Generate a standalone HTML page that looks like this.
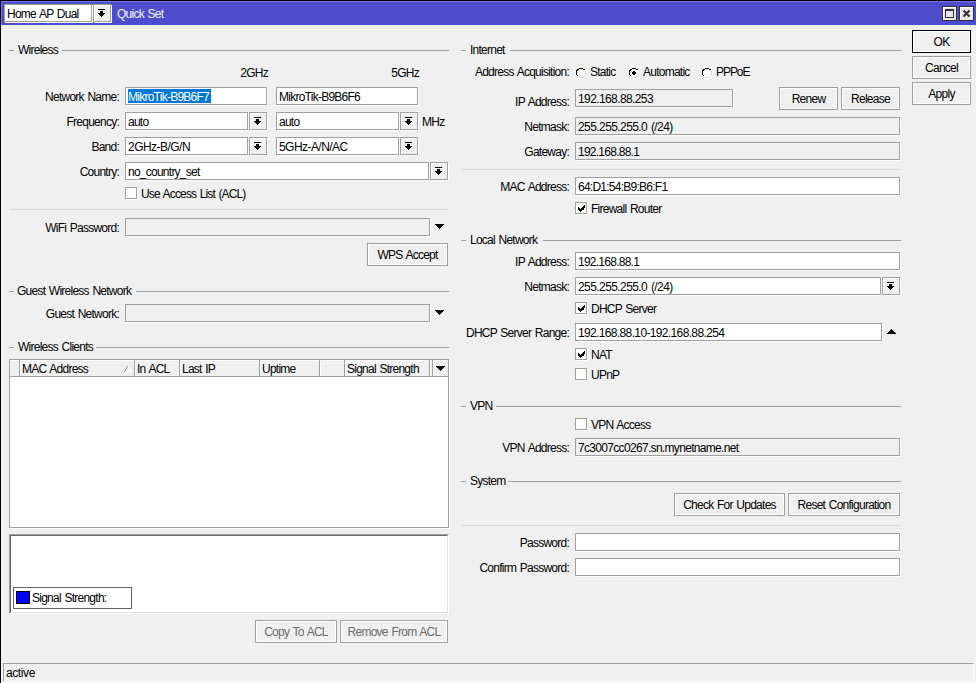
<!DOCTYPE html><html><head><meta charset="utf-8"><style>html,body{margin:0;padding:0;width:976px;height:683px;overflow:hidden;background:#f0f0f0;position:relative}.t{position:absolute;font-family:'Liberation Sans',sans-serif;font-size:12px;line-height:14px;letter-spacing:-0.75px;word-spacing:1px;white-space:nowrap;}svg{display:block}</style></head><body>
<div style="position:absolute;left:0px;top:0px;width:976px;height:1px;background:#000"></div>
<div style="position:absolute;left:0px;top:0px;width:1px;height:683px;background:#000"></div>
<div style="position:absolute;left:1px;top:1px;width:975px;height:24px;background:#4c4ccc"></div>
<div style="position:absolute;left:1px;top:1px;width:975px;height:1px;background:#7878dc"></div>
<div style="position:absolute;left:1px;top:1px;width:1px;height:24px;background:#7878dc"></div>
<div style="position:absolute;left:4px;top:4px;width:88px;height:18px;box-sizing:border-box;border:1px solid #a0a0a0;background:#fff;box-shadow:1px 1px 0 #fff"></div>
<div class="t" style="left:7px;top:7px;color:#000;">Home AP Dual</div>
<div style="position:absolute;left:93px;top:4px;width:18px;height:18px;box-sizing:border-box;border:1px solid #a0a0a0;background:#f0f0f0;box-shadow:inset 1px 1px 0 #fff,1px 1px 0 #fff"></div>
<svg style="position:absolute;left:98px;top:9px" width="7" height="8" shape-rendering="crispEdges"><rect x="0" y="0" width="7" height="1"/><rect x="2" y="2" width="3" height="2"/><rect x="0" y="4" width="7" height="1"/><rect x="1" y="5" width="5" height="1"/><rect x="2" y="6" width="3" height="1"/><rect x="3" y="7" width="1" height="1"/></svg>
<div class="t" style="left:117px;top:7px;color:#f4f4ff;">Quick Set</div>
<div style="position:absolute;left:942px;top:6px;width:15px;height:15px;box-sizing:border-box;border:1px solid #333;background:#e8e6ea;box-shadow:inset 1px 1px 0 #fff"></div>
<div style="position:absolute;left:959px;top:6px;width:15px;height:15px;box-sizing:border-box;border:1px solid #333;background:#e8e6ea;box-shadow:inset 1px 1px 0 #fff"></div>
<svg style="position:absolute;left:945px;top:9px" width="9" height="9" shape-rendering="crispEdges"><path d="M0 0h9v2h-9zM0 2h1v7h-1zM8 2h1v7h-1zM0 8h9v1h-9z" fill="#333"/></svg>
<svg style="position:absolute;left:962px;top:9px" width="9" height="9"><path d="M1.5 1.5L7.5 7.5M7.5 1.5L1.5 7.5" stroke="#333" stroke-width="2"/></svg>
<div style="position:absolute;left:912px;top:30px;width:59px;height:23px;box-sizing:border-box;border:1px solid #000;background:#f0f0f0;box-shadow:inset 1px 1px 0 #fff,inset -1px -1px 0 #fff"></div>
<div class="t" style="left:912px;width:59px;top:35px;text-align:center;color:#000">OK</div>
<div style="position:absolute;left:912px;top:56px;width:59px;height:23px;box-sizing:border-box;border:1px solid #a0a0a0;background:#f0f0f0;box-shadow:inset 1px 1px 0 #fff,inset -1px -1px 0 #fff"></div>
<div class="t" style="left:912px;width:59px;top:61px;text-align:center;color:#000">Cancel</div>
<div style="position:absolute;left:912px;top:82px;width:59px;height:23px;box-sizing:border-box;border:1px solid #a0a0a0;background:#f0f0f0;box-shadow:inset 1px 1px 0 #fff,inset -1px -1px 0 #fff"></div>
<div class="t" style="left:912px;width:59px;top:87px;text-align:center;color:#000">Apply</div>
<div style="position:absolute;left:9px;top:50px;width:5px;height:1px;background:#a0a0a0"></div>
<div class="t" style="left:18px;top:43px;color:#000;">Wireless</div>
<div style="position:absolute;left:62px;top:50px;width:387px;height:1px;background:#a0a0a0"></div>
<div class="t" style="right:708px;top:66px;color:#000;text-align:right">2GHz</div>
<div class="t" style="right:557px;top:66px;color:#000;text-align:right">5GHz</div>
<div class="t" style="right:857px;top:90px;color:#000;text-align:right">Network Name:</div>
<div style="position:absolute;left:125px;top:87px;width:142px;height:18px;box-sizing:border-box;border:1px solid #a0a0a0;background:#fff;box-shadow:1px 1px 0 #fff"></div>
<div style="position:absolute;left:128px;top:89px;width:83px;height:14px;background:#0078d7"></div>
<div class="t" style="left:128px;top:90px;color:#fff;">MikroTik-B9B6F7</div>
<div style="position:absolute;left:276px;top:87px;width:142px;height:18px;box-sizing:border-box;border:1px solid #a0a0a0;background:#fff;box-shadow:1px 1px 0 #fff"></div>
<div class="t" style="left:279px;top:90px;color:#000;">MikroTik-B9B6F6</div>
<div class="t" style="right:857px;top:115px;color:#000;text-align:right">Frequency:</div>
<div style="position:absolute;left:125px;top:112px;width:123px;height:18px;box-sizing:border-box;border:1px solid #a0a0a0;background:#fff;box-shadow:1px 1px 0 #fff"></div>
<div class="t" style="left:128px;top:115px;color:#000;">auto</div>
<div style="position:absolute;left:249px;top:112px;width:18px;height:18px;box-sizing:border-box;border:1px solid #a0a0a0;background:#f0f0f0;box-shadow:inset 1px 1px 0 #fff,1px 1px 0 #fff"></div>
<svg style="position:absolute;left:254px;top:117px" width="7" height="8" shape-rendering="crispEdges"><rect x="0" y="0" width="7" height="1"/><rect x="2" y="2" width="3" height="2"/><rect x="0" y="4" width="7" height="1"/><rect x="1" y="5" width="5" height="1"/><rect x="2" y="6" width="3" height="1"/><rect x="3" y="7" width="1" height="1"/></svg>
<div style="position:absolute;left:276px;top:112px;width:123px;height:18px;box-sizing:border-box;border:1px solid #a0a0a0;background:#fff;box-shadow:1px 1px 0 #fff"></div>
<div class="t" style="left:279px;top:115px;color:#000;">auto</div>
<div style="position:absolute;left:400px;top:112px;width:18px;height:18px;box-sizing:border-box;border:1px solid #a0a0a0;background:#f0f0f0;box-shadow:inset 1px 1px 0 #fff,1px 1px 0 #fff"></div>
<svg style="position:absolute;left:405px;top:117px" width="7" height="8" shape-rendering="crispEdges"><rect x="0" y="0" width="7" height="1"/><rect x="2" y="2" width="3" height="2"/><rect x="0" y="4" width="7" height="1"/><rect x="1" y="5" width="5" height="1"/><rect x="2" y="6" width="3" height="1"/><rect x="3" y="7" width="1" height="1"/></svg>
<div class="t" style="left:422px;top:115px;color:#000;">MHz</div>
<div class="t" style="right:857px;top:140px;color:#000;text-align:right">Band:</div>
<div style="position:absolute;left:125px;top:137px;width:123px;height:18px;box-sizing:border-box;border:1px solid #a0a0a0;background:#fff;box-shadow:1px 1px 0 #fff"></div>
<div class="t" style="left:128px;top:140px;color:#000;letter-spacing:-0.53px;">2GHz-B/G/N</div>
<div style="position:absolute;left:249px;top:137px;width:18px;height:18px;box-sizing:border-box;border:1px solid #a0a0a0;background:#f0f0f0;box-shadow:inset 1px 1px 0 #fff,1px 1px 0 #fff"></div>
<svg style="position:absolute;left:254px;top:142px" width="7" height="8" shape-rendering="crispEdges"><rect x="0" y="0" width="7" height="1"/><rect x="2" y="2" width="3" height="2"/><rect x="0" y="4" width="7" height="1"/><rect x="1" y="5" width="5" height="1"/><rect x="2" y="6" width="3" height="1"/><rect x="3" y="7" width="1" height="1"/></svg>
<div style="position:absolute;left:276px;top:137px;width:123px;height:18px;box-sizing:border-box;border:1px solid #a0a0a0;background:#fff;box-shadow:1px 1px 0 #fff"></div>
<div class="t" style="left:279px;top:140px;color:#000;letter-spacing:-0.55px;">5GHz-A/N/AC</div>
<div style="position:absolute;left:400px;top:137px;width:18px;height:18px;box-sizing:border-box;border:1px solid #a0a0a0;background:#f0f0f0;box-shadow:inset 1px 1px 0 #fff,1px 1px 0 #fff"></div>
<svg style="position:absolute;left:405px;top:142px" width="7" height="8" shape-rendering="crispEdges"><rect x="0" y="0" width="7" height="1"/><rect x="2" y="2" width="3" height="2"/><rect x="0" y="4" width="7" height="1"/><rect x="1" y="5" width="5" height="1"/><rect x="2" y="6" width="3" height="1"/><rect x="3" y="7" width="1" height="1"/></svg>
<div class="t" style="right:857px;top:165px;color:#000;text-align:right">Country:</div>
<div style="position:absolute;left:125px;top:162px;width:304px;height:18px;box-sizing:border-box;border:1px solid #a0a0a0;background:#fff;box-shadow:1px 1px 0 #fff"></div>
<div class="t" style="left:128px;top:165px;color:#000;">no_country_set</div>
<div style="position:absolute;left:430px;top:162px;width:18px;height:18px;box-sizing:border-box;border:1px solid #a0a0a0;background:#f0f0f0;box-shadow:inset 1px 1px 0 #fff,1px 1px 0 #fff"></div>
<svg style="position:absolute;left:435px;top:167px" width="7" height="8" shape-rendering="crispEdges"><rect x="0" y="0" width="7" height="1"/><rect x="2" y="2" width="3" height="2"/><rect x="0" y="4" width="7" height="1"/><rect x="1" y="5" width="5" height="1"/><rect x="2" y="6" width="3" height="1"/><rect x="3" y="7" width="1" height="1"/></svg>
<div style="position:absolute;left:125px;top:187px;width:12px;height:12px;box-sizing:border-box;border:1px solid #a0a0a0;background:#fff;box-shadow:1px 1px 0 #fff"></div>
<div class="t" style="left:141px;top:187px;color:#000;letter-spacing:-0.85px;">Use Access List (ACL)</div>
<div style="position:absolute;left:10px;top:209px;width:439px;height:1px;background:#dadada"></div>
<div class="t" style="right:857px;top:221px;color:#000;text-align:right">WiFi Password:</div>
<div style="position:absolute;left:125px;top:218px;width:305px;height:18px;box-sizing:border-box;border:1px solid #a0a0a0;background:#f0f0f0;box-shadow:1px 1px 0 #fff"></div>
<svg style="position:absolute;left:435px;top:224px" width="9" height="5" shape-rendering="crispEdges"><path d="M0 0h9v1h-9zM1 1h7v1h-7zM2 2h5v1h-5zM3 3h3v1h-3zM4 4h1v1h-1z"/></svg>
<div style="position:absolute;left:367px;top:243px;width:81px;height:23px;box-sizing:border-box;border:1px solid #a0a0a0;background:#f0f0f0;box-shadow:inset 1px 1px 0 #fff,inset -1px -1px 0 #fff"></div>
<div class="t" style="left:367px;width:81px;top:248px;text-align:center;color:#000">WPS Accept</div>
<div style="position:absolute;left:9px;top:291px;width:5px;height:1px;background:#a0a0a0"></div>
<div class="t" style="left:17px;top:284px;color:#000;">Guest Wireless Network</div>
<div style="position:absolute;left:136px;top:291px;width:313px;height:1px;background:#a0a0a0"></div>
<div class="t" style="right:857px;top:307px;color:#000;text-align:right">Guest Network:</div>
<div style="position:absolute;left:125px;top:304px;width:305px;height:18px;box-sizing:border-box;border:1px solid #a0a0a0;background:#f0f0f0;box-shadow:1px 1px 0 #fff"></div>
<svg style="position:absolute;left:435px;top:310px" width="9" height="5" shape-rendering="crispEdges"><path d="M0 0h9v1h-9zM1 1h7v1h-7zM2 2h5v1h-5zM3 3h3v1h-3zM4 4h1v1h-1z"/></svg>
<div style="position:absolute;left:9px;top:347px;width:5px;height:1px;background:#a0a0a0"></div>
<div class="t" style="left:18px;top:340px;color:#000;">Wireless Clients</div>
<div style="position:absolute;left:96px;top:347px;width:353px;height:1px;background:#a0a0a0"></div>
<div style="position:absolute;left:9px;top:359px;width:440px;height:169px;box-sizing:border-box;border:1px solid #a0a0a0;background:#fff;box-shadow:1px 1px 0 #fff"></div>
<div style="position:absolute;left:10px;top:360px;width:438px;height:16px;background:#f0f0f0;border-bottom:1px solid #a0a0a0;box-shadow:inset 0 1px 0 #fff"></div>
<div style="position:absolute;left:19px;top:360px;width:1px;height:16px;background:#a0a0a0"></div>
<div style="position:absolute;left:20px;top:361px;width:1px;height:15px;background:#fff"></div>
<div style="position:absolute;left:134px;top:360px;width:1px;height:16px;background:#a0a0a0"></div>
<div style="position:absolute;left:135px;top:361px;width:1px;height:15px;background:#fff"></div>
<div style="position:absolute;left:179px;top:360px;width:1px;height:16px;background:#a0a0a0"></div>
<div style="position:absolute;left:180px;top:361px;width:1px;height:15px;background:#fff"></div>
<div style="position:absolute;left:259px;top:360px;width:1px;height:16px;background:#a0a0a0"></div>
<div style="position:absolute;left:260px;top:361px;width:1px;height:15px;background:#fff"></div>
<div style="position:absolute;left:319px;top:360px;width:1px;height:16px;background:#a0a0a0"></div>
<div style="position:absolute;left:320px;top:361px;width:1px;height:15px;background:#fff"></div>
<div style="position:absolute;left:344px;top:360px;width:1px;height:16px;background:#a0a0a0"></div>
<div style="position:absolute;left:345px;top:361px;width:1px;height:15px;background:#fff"></div>
<div style="position:absolute;left:429px;top:360px;width:1px;height:16px;background:#a0a0a0"></div>
<div style="position:absolute;left:430px;top:361px;width:1px;height:15px;background:#fff"></div>
<div style="position:absolute;left:432px;top:360px;width:1px;height:16px;background:#a0a0a0"></div>
<div style="position:absolute;left:433px;top:361px;width:1px;height:15px;background:#fff"></div>
<div class="t" style="left:22px;top:362px;color:#000;">MAC Address</div>
<div class="t" style="left:137px;top:362px;color:#000;">In ACL</div>
<div class="t" style="left:182px;top:362px;color:#000;">Last IP</div>
<div class="t" style="left:262px;top:362px;color:#000;">Uptime</div>
<div class="t" style="left:347px;top:362px;color:#000;">Signal Strength</div>
<svg style="position:absolute;left:436px;top:366px" width="9" height="5" shape-rendering="crispEdges"><path d="M0 0h9v1h-9zM1 1h7v1h-7zM2 2h5v1h-5zM3 3h3v1h-3zM4 4h1v1h-1z"/></svg>
<svg style="position:absolute;left:124px;top:366px" width="8" height="6" shape-rendering="crispEdges"><path d="M3 0h1v1h-1zM2 1h1v2h-1zM1 3h1v2h-1zM0 5h1v1h-1z" fill="#8a8a8a"/><path d="M4 0h1v2h-1zM5 2h1v2h-1zM6 4h1v1h-1zM1 5h7v1h-7z" fill="#fff"/></svg>
<div style="position:absolute;left:9px;top:534px;width:440px;height:80px;box-sizing:border-box;border-top:1px solid #a0a0a0;border-left:1px solid #a0a0a0;border-right:1px solid #fff;border-bottom:1px solid #fff;"></div>
<div style="position:absolute;left:10px;top:535px;width:438px;height:78px;box-sizing:border-box;border-top:1px solid #696969;border-left:1px solid #696969;border-right:1px solid #e3e3e3;border-bottom:1px solid #e3e3e3;background:#fff"></div>
<div style="position:absolute;left:13px;top:587px;width:119px;height:22px;box-sizing:border-box;border:1px solid #646464;background:#fff"></div>
<div style="position:absolute;left:16px;top:591px;width:14px;height:13px;box-sizing:border-box;border:1px solid #000;background:#0000ff"></div>
<div class="t" style="left:32px;top:591px;color:#000;">Signal Strength:</div>
<div style="position:absolute;left:255px;top:620px;width:82px;height:23px;box-sizing:border-box;border:1px solid #a0a0a0;background:#f0f0f0;box-shadow:inset 1px 1px 0 #fff,inset -1px -1px 0 #fff"></div>
<div class="t" style="left:255px;width:82px;top:625px;text-align:center;color:#6d6d6d">Copy To ACL</div>
<div style="position:absolute;left:340px;top:620px;width:108px;height:23px;box-sizing:border-box;border:1px solid #a0a0a0;background:#f0f0f0;box-shadow:inset 1px 1px 0 #fff,inset -1px -1px 0 #fff"></div>
<div class="t" style="left:340px;width:108px;top:625px;text-align:center;color:#6d6d6d">Remove From ACL</div>
<div style="position:absolute;left:3px;top:663px;width:971px;height:19px;box-sizing:border-box;border-top:1px solid #a0a0a0;border-left:1px solid #a0a0a0;border-right:1px solid #fff;border-bottom:1px solid #fff"></div>
<div class="t" style="left:6px;top:666px;color:#000;letter-spacing:-0.4px;">active</div>
<div style="position:absolute;left:461px;top:50px;width:5px;height:1px;background:#a0a0a0"></div>
<div class="t" style="left:470px;top:43px;color:#000;">Internet</div>
<div style="position:absolute;left:510px;top:50px;width:391px;height:1px;background:#a0a0a0"></div>
<div class="t" style="right:407px;top:65px;color:#000;text-align:right">Address Acquisition:</div>
<svg style="position:absolute;left:575px;top:67px" width="12" height="12" shape-rendering="crispEdges"><rect x="2" y="2" width="8" height="1" fill="#fff"/><rect x="1" y="3" width="10" height="6" fill="#fff"/><rect x="2" y="9" width="8" height="1" fill="#fff"/><rect x="4" y="10" width="4" height="1" fill="#fff"/><rect x="4" y="1" width="4" height="1" fill="#fff"/><rect x="10" y="4" width="1" height="4" fill="#d8d8d8"/><rect x="4" y="10" width="4" height="1" fill="#d8d8d8"/><rect x="8" y="9" width="2" height="1" fill="#e4e4e4"/><rect x="9" y="8" width="1" height="1" fill="#e4e4e4"/><rect x="11" y="4" width="1" height="4" fill="#fff"/><rect x="4" y="11" width="4" height="1" fill="#fff"/><rect x="10" y="8" width="1" height="2" fill="#fafafa"/><rect x="8" y="10" width="2" height="1" fill="#fafafa"/><rect x="4" y="1" width="4" height="1" fill="#000"/><rect x="2" y="2" width="2" height="1" fill="#000"/><rect x="8" y="2" width="2" height="1" fill="#000"/><rect x="1" y="3" width="2" height="1" fill="#000"/><rect x="1" y="4" width="1" height="4" fill="#000"/><rect x="2" y="8" width="1" height="1" fill="#000"/></svg>
<div class="t" style="left:590px;top:65px;color:#000;">Static</div>
<svg style="position:absolute;left:628px;top:67px" width="12" height="12" shape-rendering="crispEdges"><rect x="2" y="2" width="8" height="1" fill="#fff"/><rect x="1" y="3" width="10" height="6" fill="#fff"/><rect x="2" y="9" width="8" height="1" fill="#fff"/><rect x="4" y="10" width="4" height="1" fill="#fff"/><rect x="4" y="1" width="4" height="1" fill="#fff"/><rect x="10" y="4" width="1" height="4" fill="#d8d8d8"/><rect x="4" y="10" width="4" height="1" fill="#d8d8d8"/><rect x="8" y="9" width="2" height="1" fill="#e4e4e4"/><rect x="9" y="8" width="1" height="1" fill="#e4e4e4"/><rect x="11" y="4" width="1" height="4" fill="#fff"/><rect x="4" y="11" width="4" height="1" fill="#fff"/><rect x="10" y="8" width="1" height="2" fill="#fafafa"/><rect x="8" y="10" width="2" height="1" fill="#fafafa"/><rect x="4" y="1" width="4" height="1" fill="#000"/><rect x="2" y="2" width="2" height="1" fill="#000"/><rect x="8" y="2" width="2" height="1" fill="#000"/><rect x="1" y="3" width="2" height="1" fill="#000"/><rect x="1" y="4" width="1" height="4" fill="#000"/><rect x="2" y="8" width="1" height="1" fill="#000"/><rect x="5" y="4" width="2" height="1" fill="#000"/><rect x="4" y="5" width="4" height="2" fill="#000"/><rect x="5" y="7" width="2" height="1" fill="#000"/></svg>
<div class="t" style="left:643px;top:65px;color:#000;">Automatic</div>
<svg style="position:absolute;left:701px;top:67px" width="12" height="12" shape-rendering="crispEdges"><rect x="2" y="2" width="8" height="1" fill="#fff"/><rect x="1" y="3" width="10" height="6" fill="#fff"/><rect x="2" y="9" width="8" height="1" fill="#fff"/><rect x="4" y="10" width="4" height="1" fill="#fff"/><rect x="4" y="1" width="4" height="1" fill="#fff"/><rect x="10" y="4" width="1" height="4" fill="#d8d8d8"/><rect x="4" y="10" width="4" height="1" fill="#d8d8d8"/><rect x="8" y="9" width="2" height="1" fill="#e4e4e4"/><rect x="9" y="8" width="1" height="1" fill="#e4e4e4"/><rect x="11" y="4" width="1" height="4" fill="#fff"/><rect x="4" y="11" width="4" height="1" fill="#fff"/><rect x="10" y="8" width="1" height="2" fill="#fafafa"/><rect x="8" y="10" width="2" height="1" fill="#fafafa"/><rect x="4" y="1" width="4" height="1" fill="#000"/><rect x="2" y="2" width="2" height="1" fill="#000"/><rect x="8" y="2" width="2" height="1" fill="#000"/><rect x="1" y="3" width="2" height="1" fill="#000"/><rect x="1" y="4" width="1" height="4" fill="#000"/><rect x="2" y="8" width="1" height="1" fill="#000"/></svg>
<div class="t" style="left:716px;top:65px;color:#000;letter-spacing:-1.05px;">PPPoE</div>
<div class="t" style="right:407px;top:95px;color:#000;text-align:right">IP Address:</div>
<div style="position:absolute;left:575px;top:89px;width:158px;height:18px;box-sizing:border-box;border:1px solid #a0a0a0;background:#f0f0f0;box-shadow:1px 1px 0 #fff"></div>
<div class="t" style="left:578px;top:92px;color:#000;letter-spacing:-0.6px;">192.168.88.253</div>
<div style="position:absolute;left:779px;top:87px;width:59px;height:23px;box-sizing:border-box;border:1px solid #a0a0a0;background:#f0f0f0;box-shadow:inset 1px 1px 0 #fff,inset -1px -1px 0 #fff"></div>
<div class="t" style="left:779px;width:59px;top:92px;text-align:center;color:#000">Renew</div>
<div style="position:absolute;left:841px;top:87px;width:59px;height:23px;box-sizing:border-box;border:1px solid #a0a0a0;background:#f0f0f0;box-shadow:inset 1px 1px 0 #fff,inset -1px -1px 0 #fff"></div>
<div class="t" style="left:841px;width:59px;top:92px;text-align:center;color:#000">Release</div>
<div class="t" style="right:407px;top:120px;color:#000;text-align:right">Netmask:</div>
<div style="position:absolute;left:575px;top:117px;width:325px;height:18px;box-sizing:border-box;border:1px solid #a0a0a0;background:#f0f0f0;box-shadow:1px 1px 0 #fff"></div>
<div class="t" style="left:578px;top:120px;color:#000;letter-spacing:-0.58px;">255.255.255.0 (/24)</div>
<div class="t" style="right:407px;top:145px;color:#000;text-align:right">Gateway:</div>
<div style="position:absolute;left:575px;top:142px;width:325px;height:18px;box-sizing:border-box;border:1px solid #a0a0a0;background:#f0f0f0;box-shadow:1px 1px 0 #fff"></div>
<div class="t" style="left:578px;top:145px;color:#000;">192.168.88.1</div>
<div style="position:absolute;left:462px;top:169px;width:439px;height:1px;background:#dadada"></div>
<div class="t" style="right:407px;top:180px;color:#000;text-align:right">MAC Address:</div>
<div style="position:absolute;left:575px;top:177px;width:325px;height:18px;box-sizing:border-box;border:1px solid #a0a0a0;background:#fff;box-shadow:1px 1px 0 #fff"></div>
<div class="t" style="left:578px;top:180px;color:#000;">64:D1:54:B9:B6:F1</div>
<div style="position:absolute;left:575px;top:202px;width:12px;height:12px;box-sizing:border-box;border:1px solid #a0a0a0;background:#fff;box-shadow:1px 1px 0 #fff"></div>
<svg style="position:absolute;left:578px;top:205px" width="7" height="7" shape-rendering="crispEdges"><path d="M6 0h1v3h-1zM5 1h1v4h-1zM4 2h1v3h-1zM3 3h1v3h-1zM2 4h1v3h-1zM1 3h1v3h-1zM0 2h1v3h-1z"/></svg>
<div class="t" style="left:591px;top:202px;color:#000;">Firewall Router</div>
<div style="position:absolute;left:461px;top:240px;width:5px;height:1px;background:#a0a0a0"></div>
<div class="t" style="left:470px;top:233px;color:#000;">Local Network</div>
<div style="position:absolute;left:543px;top:240px;width:358px;height:1px;background:#a0a0a0"></div>
<div class="t" style="right:407px;top:255px;color:#000;text-align:right">IP Address:</div>
<div style="position:absolute;left:575px;top:252px;width:325px;height:18px;box-sizing:border-box;border:1px solid #a0a0a0;background:#fff;box-shadow:1px 1px 0 #fff"></div>
<div class="t" style="left:578px;top:255px;color:#000;">192.168.88.1</div>
<div class="t" style="right:407px;top:280px;color:#000;text-align:right">Netmask:</div>
<div style="position:absolute;left:575px;top:277px;width:306px;height:18px;box-sizing:border-box;border:1px solid #a0a0a0;background:#fff;box-shadow:1px 1px 0 #fff"></div>
<div class="t" style="left:578px;top:280px;color:#000;letter-spacing:-0.58px;">255.255.255.0 (/24)</div>
<div style="position:absolute;left:882px;top:277px;width:18px;height:18px;box-sizing:border-box;border:1px solid #a0a0a0;background:#f0f0f0;box-shadow:inset 1px 1px 0 #fff,1px 1px 0 #fff"></div>
<svg style="position:absolute;left:887px;top:282px" width="7" height="8" shape-rendering="crispEdges"><rect x="0" y="0" width="7" height="1"/><rect x="2" y="2" width="3" height="2"/><rect x="0" y="4" width="7" height="1"/><rect x="1" y="5" width="5" height="1"/><rect x="2" y="6" width="3" height="1"/><rect x="3" y="7" width="1" height="1"/></svg>
<div style="position:absolute;left:575px;top:302px;width:12px;height:12px;box-sizing:border-box;border:1px solid #a0a0a0;background:#fff;box-shadow:1px 1px 0 #fff"></div>
<svg style="position:absolute;left:578px;top:305px" width="7" height="7" shape-rendering="crispEdges"><path d="M6 0h1v3h-1zM5 1h1v4h-1zM4 2h1v3h-1zM3 3h1v3h-1zM2 4h1v3h-1zM1 3h1v3h-1zM0 2h1v3h-1z"/></svg>
<div class="t" style="left:591px;top:302px;color:#000;">DHCP Server</div>
<div class="t" style="right:407px;top:326px;color:#000;text-align:right">DHCP Server Range:</div>
<div style="position:absolute;left:575px;top:323px;width:307px;height:18px;box-sizing:border-box;border:1px solid #a0a0a0;background:#fff;box-shadow:1px 1px 0 #fff"></div>
<div class="t" style="left:578px;top:326px;color:#000;letter-spacing:-0.64px;">192.168.88.10-192.168.88.254</div>
<svg style="position:absolute;left:887px;top:329px" width="9" height="5" shape-rendering="crispEdges"><path d="M0 4h9v1h-9zM1 3h7v1h-7zM2 2h5v1h-5zM3 1h3v1h-3zM4 0h1v1h-1z"/></svg>
<div style="position:absolute;left:575px;top:348px;width:12px;height:12px;box-sizing:border-box;border:1px solid #a0a0a0;background:#fff;box-shadow:1px 1px 0 #fff"></div>
<svg style="position:absolute;left:578px;top:351px" width="7" height="7" shape-rendering="crispEdges"><path d="M6 0h1v3h-1zM5 1h1v4h-1zM4 2h1v3h-1zM3 3h1v3h-1zM2 4h1v3h-1zM1 3h1v3h-1zM0 2h1v3h-1z"/></svg>
<div class="t" style="left:591px;top:348px;color:#000;">NAT</div>
<div style="position:absolute;left:575px;top:368px;width:12px;height:12px;box-sizing:border-box;border:1px solid #a0a0a0;background:#fff;box-shadow:1px 1px 0 #fff"></div>
<div class="t" style="left:591px;top:368px;color:#000;">UPnP</div>
<div style="position:absolute;left:461px;top:406px;width:5px;height:1px;background:#a0a0a0"></div>
<div class="t" style="left:470px;top:399px;color:#000;">VPN</div>
<div style="position:absolute;left:496px;top:406px;width:405px;height:1px;background:#a0a0a0"></div>
<div style="position:absolute;left:575px;top:418px;width:12px;height:12px;box-sizing:border-box;border:1px solid #a0a0a0;background:#fff;box-shadow:1px 1px 0 #fff"></div>
<div class="t" style="left:591px;top:418px;color:#000;">VPN Access</div>
<div class="t" style="right:407px;top:441px;color:#000;text-align:right">VPN Address:</div>
<div style="position:absolute;left:575px;top:438px;width:325px;height:18px;box-sizing:border-box;border:1px solid #a0a0a0;background:#f0f0f0;box-shadow:1px 1px 0 #fff"></div>
<div class="t" style="left:578px;top:441px;color:#000;letter-spacing:-0.68px;">7c3007cc0267.sn.mynetname.net</div>
<div style="position:absolute;left:461px;top:481px;width:5px;height:1px;background:#a0a0a0"></div>
<div class="t" style="left:470px;top:474px;color:#000;">System</div>
<div style="position:absolute;left:508px;top:481px;width:393px;height:1px;background:#a0a0a0"></div>
<div style="position:absolute;left:674px;top:493px;width:111px;height:23px;box-sizing:border-box;border:1px solid #a0a0a0;background:#f0f0f0;box-shadow:inset 1px 1px 0 #fff,inset -1px -1px 0 #fff"></div>
<div class="t" style="left:674px;width:111px;top:498px;text-align:center;color:#000">Check For Updates</div>
<div style="position:absolute;left:788px;top:493px;width:112px;height:23px;box-sizing:border-box;border:1px solid #a0a0a0;background:#f0f0f0;box-shadow:inset 1px 1px 0 #fff,inset -1px -1px 0 #fff"></div>
<div class="t" style="left:788px;width:112px;top:498px;text-align:center;color:#000">Reset Configuration</div>
<div style="position:absolute;left:462px;top:525px;width:439px;height:1px;background:#dadada"></div>
<div class="t" style="right:407px;top:536px;color:#000;text-align:right">Password:</div>
<div style="position:absolute;left:575px;top:533px;width:325px;height:18px;box-sizing:border-box;border:1px solid #a0a0a0;background:#fff;box-shadow:1px 1px 0 #fff"></div>
<div class="t" style="right:407px;top:561px;color:#000;text-align:right">Confirm Password:</div>
<div style="position:absolute;left:575px;top:558px;width:325px;height:18px;box-sizing:border-box;border:1px solid #a0a0a0;background:#fff;box-shadow:1px 1px 0 #fff"></div>
</body></html>
